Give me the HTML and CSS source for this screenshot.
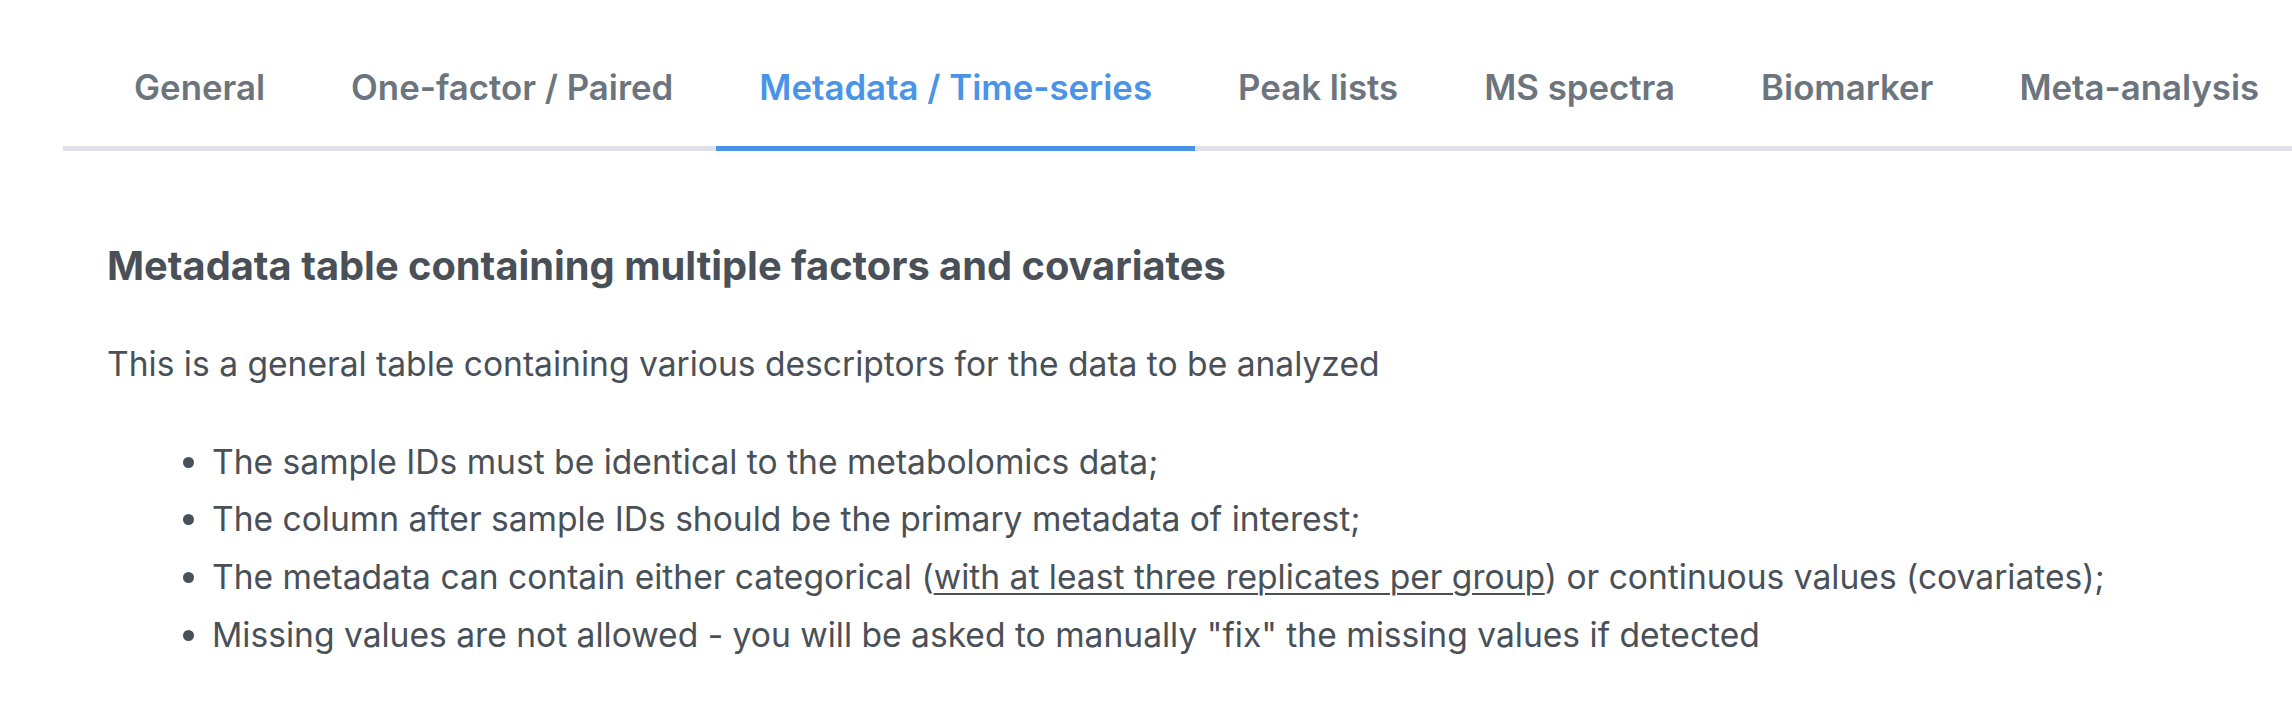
FILE: index.html
```html
<!DOCTYPE html>
<html lang="en">
<head>
    <meta charset="UTF-8">
    <title>Data formats - Metadata</title>
    <link rel="stylesheet" href="styles.css">
</head>
<body>

<nav class="tabs">
    <a class="tab" href="#general">General</a>
    <a class="tab" href="#one-factor">One-factor / Paired</a>
    <a class="tab active" href="#metadata">Metadata / Time-series</a>
    <a class="tab" href="#peaks">Peak lists</a>
    <a class="tab" href="#spectra">MS spectra</a>
    <a class="tab" href="#biomarker">Biomarker</a>
    <a class="tab" href="#meta">Meta-analysis</a>
</nav>

<div class="tab-pane">
    <h4>Metadata table containing multiple factors and covariates</h4>
    <p>This is a general table containing various descriptors for the data to be analyzed</p>
    <ul>
        <li>The sample IDs must be identical to the metabolomics data;</li>
        <li>The column after sample IDs should be the primary metadata of interest;</li>
        <li>The metadata can contain either categorical (<a href="#replicates">with at least three replicates per group</a>) or continuous values (covariates);</li>
        <li>Missing values are not allowed - you will be asked to manually "fix" the missing values if detected</li>
    </ul>
</div>

</body>
</html>
```

FILE: styles.css
```css
body {
    font-family: Inter, "Noto Sans", sans-serif;
    color: #495057;
    background: #fff;
    margin: 0;
    padding: 0;
}
.tabs {
    display: flex;
    margin: 55px 0 0 63px;
    padding-left: 28px;
    border-bottom: 5px solid #dee2e6;
}
.tab {
    display: block;
    flex-shrink: 0;
    white-space: nowrap;
    padding: 12px 43px 37px;
    margin-bottom: -5px;
    border-bottom: 5px solid transparent;
    font-size: 34.8px;
    font-weight: 600;
    line-height: 1.2;
    color: #6c757d;
    text-decoration: none;
}
.tab.active {
    color: #4a94e8;
    border-bottom-color: #4a94e8;
}
.tab-pane {
    padding: 0 0 0 107px;
}
.tab-pane h4 {
    margin: 91px 0 0;
    font-size: 39.8px;
    font-weight: 700;
    line-height: 1.2;
}
.tab-pane p {
    margin: 49px 0 0;
    font-size: 33.6px;
    line-height: 1.5;
}
.tab-pane ul {
    margin: 44px 0 0;
    padding-left: 105px;
    font-size: 33.6px;
    line-height: 1.714;
}
.tab-pane ul a {
    color: inherit;
    text-decoration: underline;
    text-decoration-thickness: 2px;
    text-underline-offset: 4px;
}
```
